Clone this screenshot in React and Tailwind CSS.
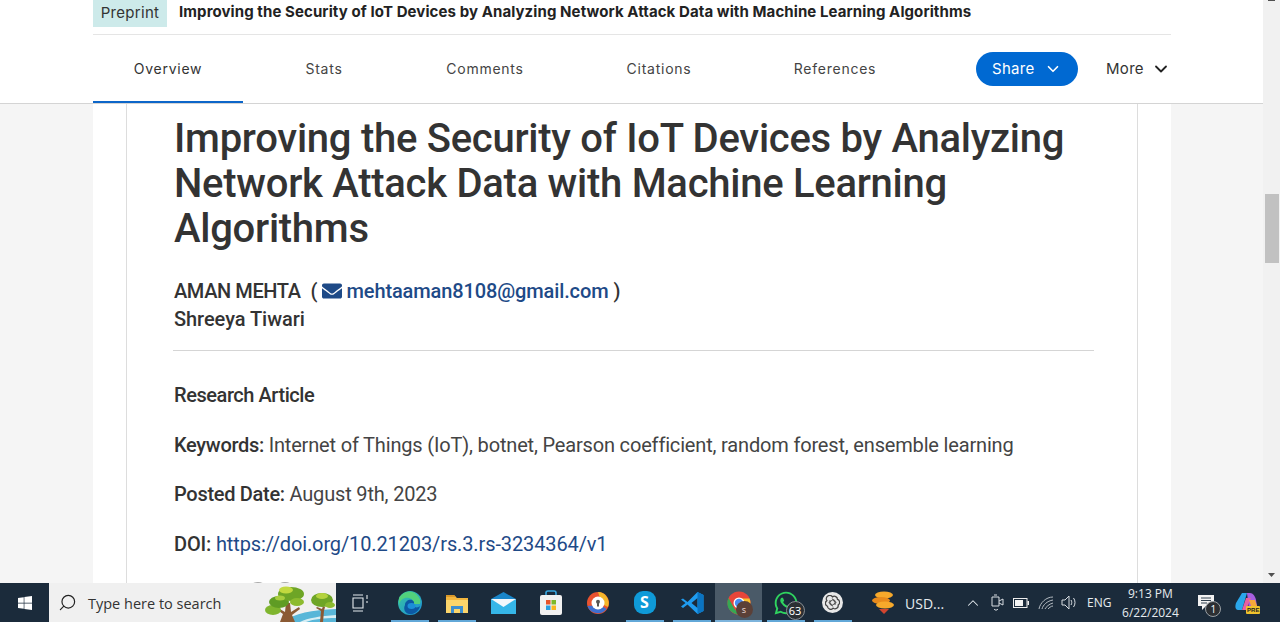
import { ChevronDown, ChevronUp, Search } from 'lucide-react';
import { FaEnvelope, FaWindows, FaWhatsapp } from 'react-icons/fa';

const tabs = [
  { label: 'Overview', width: 'w-[150px]', active: true },
  { label: 'Stats', width: 'w-[162px]' },
  { label: 'Comments', width: 'w-[160px]' },
  { label: 'Citations', width: 'w-[188px]' },
  { label: 'References', width: 'w-[164px]' },
];

function DocHeader() {
  return (
    <header className="h-[104px] shrink-0 bg-white border-b border-[#d4d4d4]">
      <div className="w-[1078px] ml-[93px]">
        <div className="h-[35px] border-b border-[#e5e5e5] flex items-start gap-[12px]">
          <span className="h-[27px] w-[74px] bg-[#cdeaea] text-[#333] text-[15px] tracking-[0.3px] flex items-center justify-center font-['Inter']">
            Preprint
          </span>
          <span className="h-[25px] flex items-center font-['Inter'] font-bold text-[15px] text-[#222] tracking-[0.09px] whitespace-nowrap">
            Improving the Security of IoT Devices by Analyzing Network Attack Data with Machine Learning Algorithms
          </span>
        </div>
        <div className="h-[68px] flex items-stretch">
          {tabs.map((t) => (
            <div
              key={t.label}
              className={`${t.width} flex items-center justify-center border-b-2 font-['Inter'] text-[14px] tracking-[0.75px] ${t.active ? 'border-[#0c66c9] text-[#333]' : 'border-transparent text-[#444]'}`}
            >
              {t.label}
            </div>
          ))}
          <div className="flex items-center gap-[28px] ml-[59px]">
            <button className="w-[102px] h-[34px] rounded-full bg-[#0069d2] text-white flex items-center justify-start pl-[16px] gap-[9px] font-['Inter'] text-[15px] tracking-[0.3px]">
              Share
              <ChevronDown size={18} strokeWidth={2.200} />
            </button>
            <div className="flex items-center gap-[7px] font-['Inter'] text-[15px] tracking-[0.3px] text-[#333]">
              More
              <ChevronDown size={20} strokeWidth={2.200} className="text-[#222]" />
            </div>
          </div>
        </div>
      </div>
    </header>
  );
}

function Article() {
  return (
    <div className="w-[1078px] ml-[93px] flex-1 bg-white px-[33px] overflow-hidden">
      <div className="h-full border-x border-[#dddddd] pl-[46px] pr-[43px] pt-[12px] font-['Roboto'] text-[#333]">
        <h1 className="text-[40px] leading-[45px] font-medium text-[#333] tracking-[-0.27px] ml-[1px]">
          Improving the Security of IoT Devices by Analyzing Network Attack Data with Machine Learning Algorithms
        </h1>
        <div className="mt-[26px] text-[20px] leading-[28px] font-medium ml-[1px]">
          <div className="flex items-center">
            <span className="tracking-[-0.4px]">AMAN MEHTA</span>
            <span className="ml-[10px]">(</span>
            <FaEnvelope className="ml-[4px] text-[#1e4a87] w-[20px] h-[20px]" />
            <span className="ml-[5px] text-[#1e4a87] tracking-[-0.12px]">mehtaaman8108@gmail.com</span>
            <span className="ml-[5px]">)</span>
          </div>
          <div className="tracking-[-0.05px]">Shreeya Tiwari</div>
        </div>
        <hr className="mt-[17px] border-[#d5d5d5]" />
        <div className="mt-[30px] ml-[1px] text-[20px] leading-[28px] flex flex-col gap-[21.500px] text-[#444] tracking-[-0.17px]">
          <div className="font-medium text-[#333] tracking-[-0.44px]">Research Article</div>
          <div>
            <span className="font-medium text-[#333] tracking-[-0.3px]">Keywords: </span>
            Internet of Things (IoT), botnet, Pearson coefficient, random forest, ensemble learning
          </div>
          <div>
            <span className="font-medium text-[#333] tracking-[-0.3px]">Posted Date: </span>
            August 9th, 2023
          </div>
          <div>
            <span className="font-medium text-[#333]">DOI: </span>
            <span className="text-[#1e4a87] tracking-[-0.12px]">https://doi.org/10.21203/rs.3.rs-3234364/v1</span>
          </div>
          <div className="h-[28px] flex items-center gap-[5px] pl-[73px]">
            <span className="w-[22px] h-[22px] rounded-full border-2 border-[#aaa]" />
            <span className="w-[22px] h-[22px] rounded-full border-2 border-[#aaa]" />
          </div>
        </div>
      </div>
    </div>
  );
}

function Scrollbar() {
  return (
    <div className="w-[17px] shrink-0 bg-[#f1f1f1] flex flex-col items-center">
      <div className="w-[7px] h-[1px] bg-[#505050]" />
      <div className="w-[14px] h-[69px] mt-[193px] bg-[#c1c1c1]" />
      <div className="flex-1" />
      <svg width="9" height="6" viewBox="0 0 9 6" className="mb-[5px]">
        <path d="M1 1h7L4.500 5z" fill="#505050" />
      </svg>
    </div>
  );
}

function Edge() {
  return (
    <svg width="26" height="26" viewBox="0 0 26 26">
      <defs>
        <linearGradient id="edgeA" x1="0" y1="0" x2="1" y2="1">
          <stop offset="0" stopColor="#39c6a0" />
          <stop offset="1" stopColor="#1b8fd8" />
        </linearGradient>
      </defs>
      <circle cx="13" cy="13" r="12" fill="url(#edgeA)" />
      <path d="M2 15C3 9 8 7 12 8c4 1 5 4 4 6h7c1-3 0-6-2-8C17 0 7 0 2 8z" fill="#52d17c" />
      <path d="M8 15c0-4 4-6 7-5 2 1 3 3 1 5-1 1 0 2 2 2 2 1 4 0 5-1-1 5-6 9-11 8-4-1-6-5-4-9z" fill="#0c59a4" />
      <ellipse cx="14.500" cy="16" rx="4" ry="3" fill="#1b8fd8" />
    </svg>
  );
}

function Folder() {
  return (
    <svg width="24" height="22" viewBox="0 0 24 22">
      <path d="M1 3h8l3 3h11v15H1z" fill="#f3b73f" />
      <path d="M1 3h8l2 2H1z" fill="#d9982a" />
      <path d="M1 8h22v13H1z" fill="#fbd56b" />
      <path d="M6 14h12v7h-3v-4H9v4H6z" fill="#3c8fd0" />
    </svg>
  );
}

function Mail() {
  return (
    <svg width="25" height="22" viewBox="0 0 25 22">
      <path d="M0 7L12.500 0 25 7v15H0z" fill="#1a86c9" />
      <path d="M0 7l12.500 7L25 7v15H0z" fill="#35b6e8" />
      <path d="M0 7h25l-12.500 8z" fill="#f3f8fb" />
    </svg>
  );
}

function Store() {
  return (
    <svg width="24" height="26" viewBox="0 0 24 26">
      <path d="M7 6V3a2 2 0 012-2h6a2 2 0 012 2v3" fill="none" stroke="#38a7e0" strokeWidth="1.600" />
      <rect x="1" y="5" width="22" height="20" rx="2" fill="#f1f1f1" />
      <rect x="7" y="10" width="4.500" height="4.500" fill="#e8532a" />
      <rect x="12.500" y="10" width="4.500" height="4.500" fill="#7db928" />
      <rect x="7" y="15.500" width="4.500" height="4.500" fill="#2a9fe2" />
      <rect x="12.500" y="15.500" width="4.500" height="4.500" fill="#f8b71d" />
    </svg>
  );
}

function Privacy() {
  return (
    <svg width="24" height="24" viewBox="0 0 24 24">
      <circle cx="12" cy="12" r="11" fill="#e9522f" />
      <path d="M12 1a11 11 0 0 1 10 15l-6-3z" fill="#f4b62b" />
      <path d="M1.500 15a11 11 0 0 0 19 3l-6-4z" fill="#3e6fd1" />
      <circle cx="12" cy="12" r="6.500" fill="#fff" />
      <circle cx="12" cy="10.800" r="2" fill="#555" />
      <rect x="11" y="11.500" width="2" height="4" fill="#555" />
    </svg>
  );
}

function Vscode() {
  return (
    <svg width="24" height="24" viewBox="0 0 24 24">
      <path d="M17.500 1L23.500 4v16l-6 3-10-9.500-4.500 3.500L1 15.500 5.500 12 1 8.500 3 7.500l4.500 3.500z" fill="#1f9cf0" />
      <path d="M17.500 7l-6 5 6 5z" fill="#1c2b3b" />
      <path d="M17.500 1L23.500 4v16l-6 3z" fill="#0a74c2" />
    </svg>
  );
}

function Chrome() {
  return (
    <div className="relative w-[24px] h-[24px]">
      <svg width="24" height="24" viewBox="0 0 24 24">
        <circle cx="12" cy="12" r="11.500" fill="#e8453a" />
        <path d="M1.500 7l5.500 10 5 6.500A11.500 11.500 0 0 1 1.500 7z" fill="#35a853" />
        <path d="M12 7.500h10.500A11.500 11.500 0 0 1 12 23.500l5-9z" fill="#fbc02d" />
        <circle cx="12" cy="12" r="5.500" fill="#fff" />
        <circle cx="12" cy="12" r="4.200" fill="#4a8df0" />
      </svg>
      <span className="absolute left-[9px] top-[10px] w-[17px] h-[17px] rounded-full bg-[#5b4038] text-[#e4d5cf] text-[9px] leading-[17px] text-center font-['Noto_Sans']">
        s
      </span>
    </div>
  );
}

function Whatsapp() {
  return (
    <div className="relative w-[26px] h-[26px]">
      <FaWhatsapp className="w-[26px] h-[26px] text-[#2fd35f]" />
      <span className="absolute left-[13px] top-[11px] w-[19px] h-[19px] rounded-full bg-[#2b2f33] border border-[#8a8f94] text-white text-[11px] leading-[17px] text-center font-['Noto_Sans']">
        63
      </span>
    </div>
  );
}

function Gpt() {
  return (
    <div className="w-[21px] h-[21px] rounded-full bg-[#e8e8e8] flex items-center justify-center">
      <svg width="15" height="15" viewBox="0 0 24 24" fill="none" stroke="#444" strokeWidth="2">
        <path d="M12 3a5 5 0 018 4 5 5 0 011 9 5 5 0 01-8 5 5 5 0 01-9-3 5 5 0 01-1-9 5 5 0 019-6z" />
        <path d="M8 8v7l5 3M16 16V9l-5-3M6 12l6-4 6 4-6 4z" strokeWidth="1.500" />
      </svg>
    </div>
  );
}

function Coins() {
  return (
    <svg width="24" height="24" viewBox="0 0 24 24">
      <ellipse cx="12" cy="4" rx="9" ry="3.500" fill="#f7a92b" />
      <ellipse cx="9" cy="9.500" rx="9" ry="3.500" fill="#e88a1c" />
      <ellipse cx="13" cy="14" rx="9" ry="3.500" fill="#f7a92b" />
      <path d="M7 18h10l-5 5z" fill="#d2452f" />
    </svg>
  );
}

function Trees() {
  return (
    <svg width="72" height="39" viewBox="0 0 72 39" className="shrink-0">
      <path d="M20 39c10-9 28-12 52-13v13z" fill="#58b6d8" />
      <path d="M36 39c8-4 20-6 36-7v3c-12 0-22 1-30 4z" fill="#d7eef4" />
      <path d="M16 39l3-8-7-5 2-1 7 4 1-9h4l1 9 8-5 1 2-8 6 3 7zM56 39l1-11-5-3 1-1 5 2 1-3 2 1-1 4-1 11z" fill="#8b5a34" />
      <ellipse cx="9" cy="27" rx="8" ry="5" fill="#7fb52e" />
      <ellipse cx="15" cy="19" rx="10" ry="6" fill="#5f9c24" />
      <ellipse cx="27" cy="11" rx="13" ry="7" fill="#6ea526" />
      <ellipse cx="22" cy="7" rx="7" ry="3.500" fill="#c2d93f" />
      <ellipse cx="33" cy="19" rx="7" ry="4" fill="#8dbb2f" />
      <ellipse cx="16" cy="15" rx="5" ry="2.500" fill="#a8cd3d" />
      <ellipse cx="58" cy="17" rx="11" ry="7" fill="#6ea526" />
      <ellipse cx="58" cy="13" rx="6" ry="3" fill="#b4d23e" />
      <ellipse cx="66" cy="22" rx="5" ry="3" fill="#8dbb2f" />
    </svg>
  );
}

function Slot({ w = 'w-[47px]', on, active, children, extra = '' }) {
  return (
    <div className={`${w} h-full shrink-0 flex flex-col items-center ${active ? 'bg-[#4a5a68]' : ''}`}>
      <div className={`flex-1 w-full flex items-center justify-center pt-[2px] ${extra}`}>{children}</div>
      <div className={`h-[2px] ${active ? 'w-full bg-[#7db4dc]' : on ? 'w-[38px] bg-[#62a8d8]' : 'w-[38px]'}`} />
    </div>
  );
}

function Taskbar() {
  return (
    <footer className="h-[39px] shrink-0 bg-[#1b2b3b] flex items-stretch text-[#e6ebef] font-['Open_Sans']">
      <div className="w-[49px] flex items-center justify-center pt-[1px]">
        <FaWindows className="w-[16px] h-[16px] text-white" />
      </div>
      <div className="w-[287px] bg-[#f0f0f0] flex items-center overflow-hidden">
        <Search size={19} strokeWidth={1.500} className="ml-[9px] text-[#222] -scale-x-100" />
        <span className="ml-[11px] pt-[3px] text-[14.500px] text-[#333] flex-1 whitespace-nowrap">Type here to search</span>
        <Trees />
      </div>
      <Slot w="w-[50px]" extra="pr-[2px]">
        <svg width="18" height="18" viewBox="0 0 18 18" fill="none" stroke="#e6ebef" strokeWidth="1.100">
          <path d="M2 1h10M2 17h10M2 4h10v10H2zM16 1v4M16 7v2" />
        </svg>
      </Slot>
      <Slot on>
        <Edge />
      </Slot>
      <Slot on>
        <Folder />
      </Slot>
      <Slot>
        <Mail />
      </Slot>
      <Slot>
        <Store />
      </Slot>
      <Slot>
        <Privacy />
      </Slot>
      <Slot on>
        <div className="w-[22px] h-[23px] rounded-[9px] bg-[#0f9ad8] text-white text-[16px] leading-[23px] font-bold text-center">S</div>
      </Slot>
      <Slot on>
        <Vscode />
      </Slot>
      <Slot active>
        <Chrome />
      </Slot>
      <Slot on>
        <Whatsapp />
      </Slot>
      <Slot on>
        <Gpt />
      </Slot>
      <div className="flex items-center ml-[16px] pt-[1px]">
        <Coins />
        <span className="ml-[9px] w-[46px] text-[14px] whitespace-nowrap">USD...</span>
      </div>
      <div className="flex items-center ml-[13px]">
        <ChevronUp size={18} strokeWidth={1.400} />
        <svg width="14" height="18" viewBox="0 0 14 18" fill="none" stroke="#d8dde2" strokeWidth="1" className="ml-[9px]">
          <path d="M1 3h7v9H1zM8 7l4-2v6l-4-2M3 15c1 1.500 3 1.500 4 0M3 1h3" />
        </svg>
        <svg width="16" height="10" viewBox="0 0 16 10" className="ml-[8px]">
          <rect x="0.500" y="0.500" width="13.500" height="9" fill="none" stroke="#eee" />
          <rect x="2" y="2" width="8" height="6" fill="#f3f3f3" />
          <rect x="14.500" y="3" width="1.500" height="4" fill="#eee" />
        </svg>
        <svg width="16" height="14" viewBox="0 0 16 14" fill="none" stroke="#b4bbc2" strokeWidth="1" className="ml-[9px]">
          <path d="M1 13C2 7 8 1 15 1M4 13c1-4 5-8 11-9M7 13c1-2 4-5 8-6M10 13c1-1 3-3 5-3" />
        </svg>
        <svg width="16" height="15" viewBox="0 0 16 15" fill="none" stroke="#d8dde2" strokeWidth="1" className="ml-[7px]">
          <path d="M1 5h3l4-4v13l-4-4H1zM10 5c1 1.500 1 3.500 0 5M12.500 3c2 2.500 2 6.500 0 9" />
        </svg>
        <span className="ml-[10px] text-[12px]">ENG</span>
      </div>
      <div className="ml-[4px] w-[70px] flex flex-col items-center justify-center text-[12px] leading-[19px] pt-[1px]">
        <span>9:13 PM</span>
        <span>6/22/2024</span>
      </div>
      <div className="relative ml-[7px] w-[28px] flex items-center justify-center">
        <svg width="17" height="17" viewBox="0 0 17 17">
          <path d="M0 1h16v11H8l-4 4v-4H0z" fill="#f2f2f2" />
          <path d="M3 4h10M3 6.500h10M3 9h6" stroke="#30404e" strokeWidth="1" />
        </svg>
        <span className="absolute left-[13px] top-[18px] w-[16px] h-[16px] rounded-full bg-[#2b2f33] border border-[#9aa0a5] text-white text-[10px] leading-[14px] text-center">
          1
        </span>
      </div>
      <div className="ml-[15px] flex items-center relative">
        <svg width="23" height="22" viewBox="0 0 23 22">
          <path d="M7 1h5l-5 17H3C0 18 0 14 1 11z" fill="#2aa6ea" />
          <path d="M12 1h3c3 0 5 3 6 7l1 6c0 3-2 4-4 4h-4z" fill="#a75fe0" />
          <path d="M7 18L11 6h5l-5 12z" fill="#e95fa0" />
          <path d="M14 8h6l2 6h-6z" fill="#f6a83a" />
        </svg>
        <span className="absolute right-[-2px] bottom-[8px] bg-[#f0c22d] text-[#222] text-[6px] font-bold leading-[8px] px-[1px] rounded-[1px] font-['Liberation_Sans']">
          PRE
        </span>
      </div>
    </footer>
  );
}

export default function App() {
  return (
    <div className="w-[1280px] h-[622px] flex flex-col overflow-hidden bg-[#f5f5f5]">
      <div className="flex flex-1 min-h-0">
        <div className="flex-1 flex flex-col min-w-0">
          <DocHeader />
          <Article />
        </div>
        <Scrollbar />
      </div>
      <Taskbar />
    </div>
  );
}
